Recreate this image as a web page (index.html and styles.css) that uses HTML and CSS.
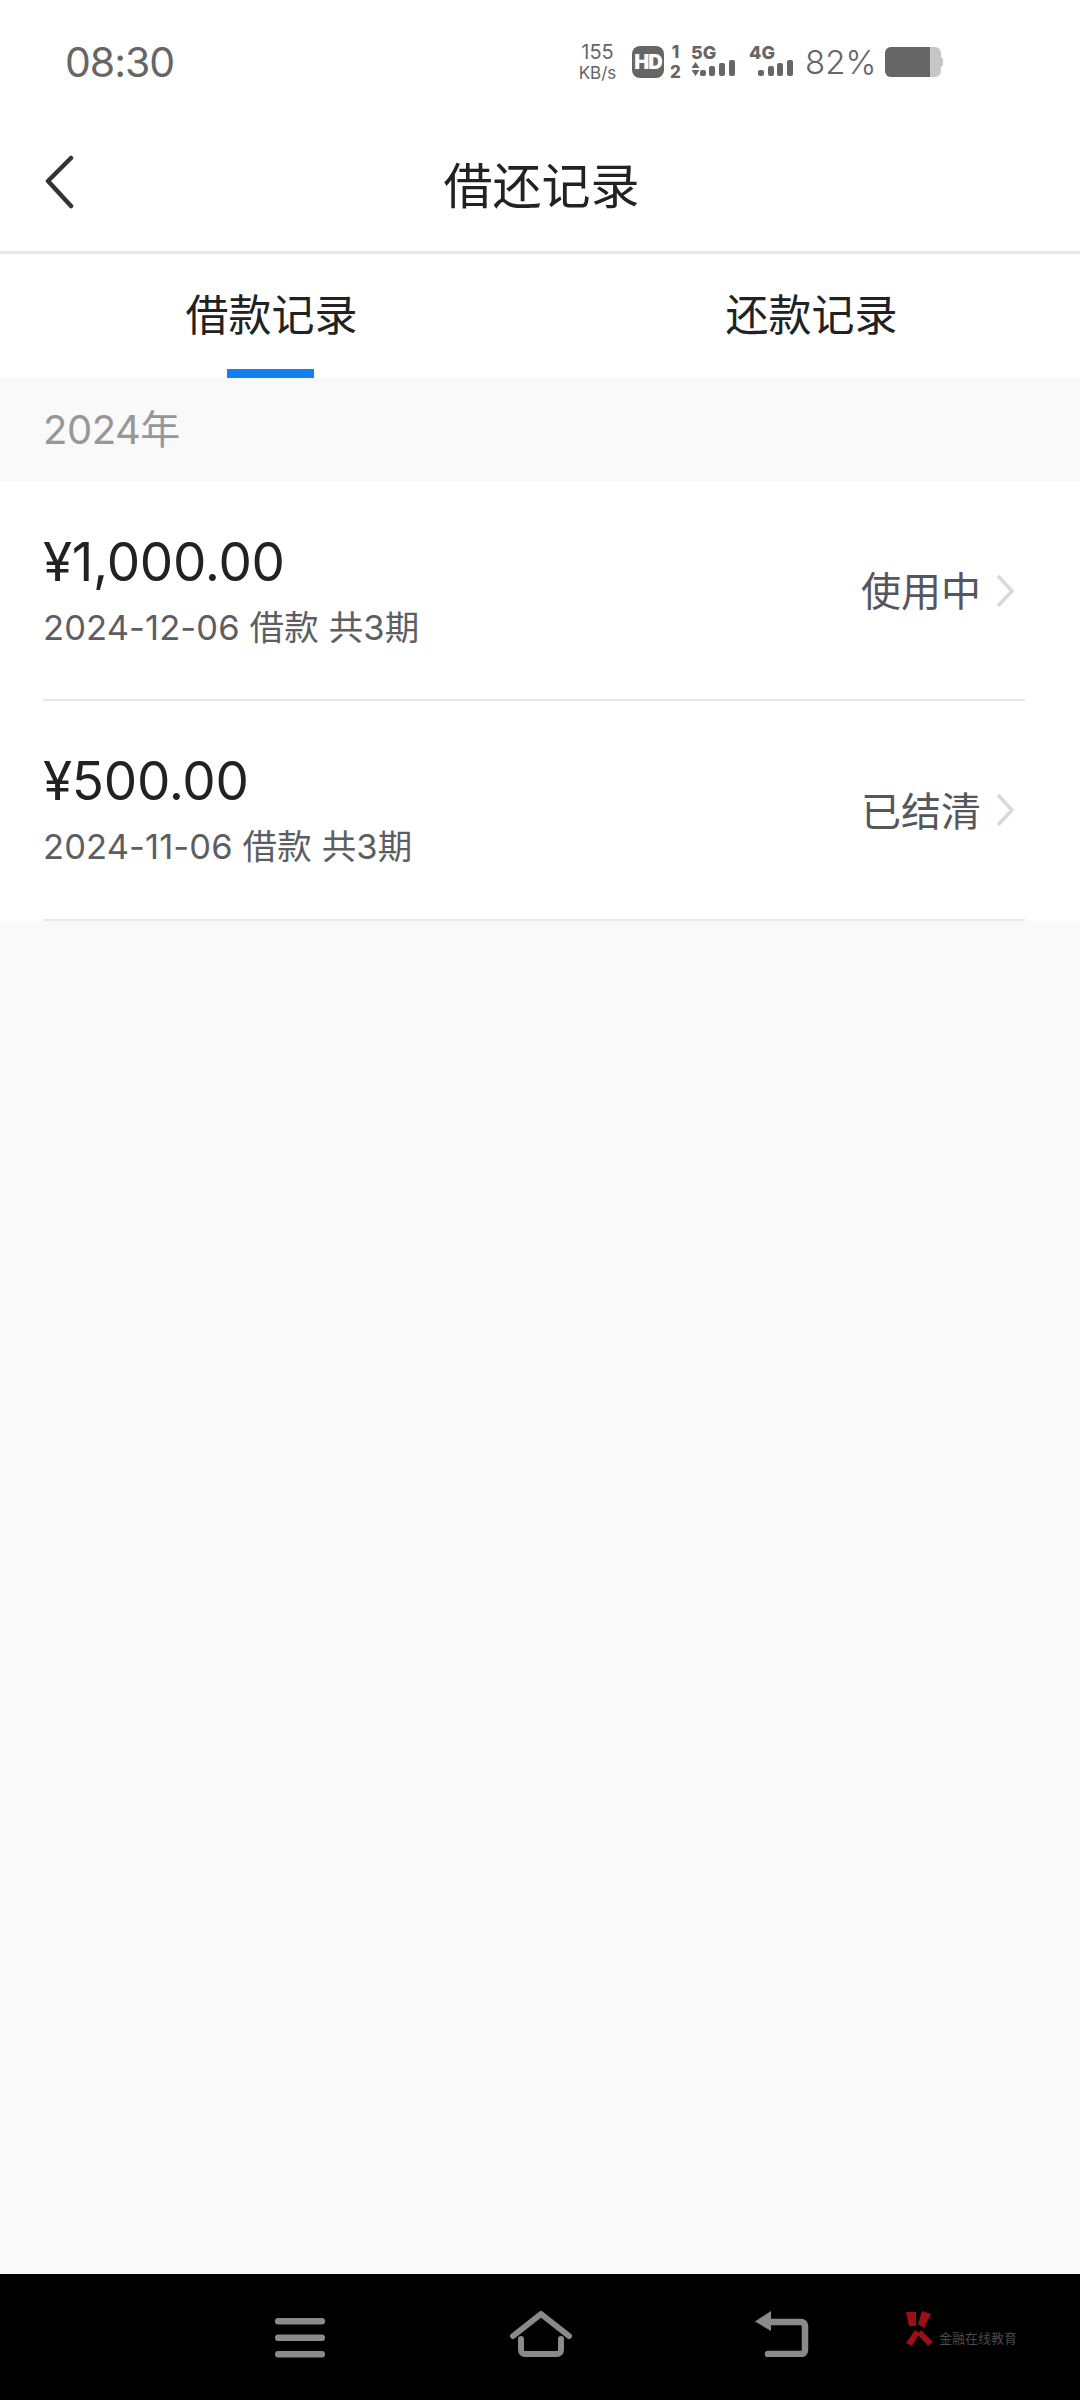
FILE: index.html
```html
<!DOCTYPE html>
<html lang="zh-CN">
<head>
    <meta charset="UTF-8">
    <meta name="viewport" content="width=device-width, initial-scale=1.0">
    <title>借还记录</title>
    <link rel="stylesheet" href="styles.css">
</head>
<body>
    <div class="page">
        <div class="status-bar">
            <span class="time">08:30</span>
            <div class="speed">155<br><small>KB/s</small></div>
            <span class="hd">HD</span>
            <div class="sim-nums"><span>1</span><span>2</span></div>
            <svg class="net net-5g" width="52" height="42" viewBox="0 -3 52 42">
                <text x="0" y="15" class="net-label">5G</text>
                <path d="M4.500 18l4 6H.5zM4.500 32l4-6H.5z" fill="#666"/>
                <rect x="9" y="26" width="6" height="6" rx="2" fill="#666"/>
                <rect x="18" y="22" width="6" height="10" rx="2" fill="#666"/>
                <rect x="28" y="19" width="6" height="13" rx="2" fill="#666"/>
                <rect x="38" y="16" width="6" height="16" rx="2" fill="#666"/>
            </svg>
            <svg class="net net-4g" width="48" height="42" viewBox="0 -3 48 42">
                <text x="0" y="15" class="net-label">4G</text>
                <rect x="9" y="26" width="6" height="6" rx="2" fill="#666"/>
                <rect x="19" y="22" width="6" height="10" rx="2" fill="#666"/>
                <rect x="28" y="19" width="6" height="13" rx="2" fill="#666"/>
                <rect x="38" y="16" width="6" height="16" rx="2" fill="#666"/>
            </svg>
            <span class="percent">82%</span>
            <svg class="battery" width="58" height="30" viewBox="0 0 58 30">
                <path d="M6 0h44a6 6 0 0 1 6 6v4a3 3 0 0 1 2 3v4a3 3 0 0 1-2 3v4a6 6 0 0 1-6 6H6a6 6 0 0 1-6-6V6a6 6 0 0 1 6-6z" fill="#c6c6c6"/>
                <path d="M6 0h39v30H6a6 6 0 0 1-6-6V6a6 6 0 0 1 6-6z" fill="#666"/>
            </svg>
        </div>

        <div class="title-bar">
            <svg class="back" width="30" height="54" viewBox="0 0 30 54">
                <path d="M26 3L3 26l23 25" fill="none" stroke="#333" stroke-width="4.5" stroke-linecap="round" stroke-linejoin="round"/>
            </svg>
            <h1>借还记录</h1>
        </div>

        <div class="tabs">
            <div class="tab active">借款记录</div>
            <div class="tab">还款记录</div>
        </div>

        <div class="year">2024年</div>

        <div class="list">
            <div class="row">
                <div class="row-info">
                    <div class="amount">¥1,000.00</div>
                    <div class="sub">2024-12-06 借款 共3期</div>
                </div>
                <span class="state">使用中</span>
                <svg class="arrow" width="20" height="34" viewBox="0 0 20 34">
                    <path d="M3 2l14 15L3 32" fill="none" stroke="#d9d9d9" stroke-width="3.5"/>
                </svg>
            </div>
            <div class="row">
                <div class="row-info">
                    <div class="amount">¥500.00</div>
                    <div class="sub">2024-11-06 借款 共3期</div>
                </div>
                <span class="state">已结清</span>
                <svg class="arrow" width="20" height="34" viewBox="0 0 20 34">
                    <path d="M3 2l14 15L3 32" fill="none" stroke="#d9d9d9" stroke-width="3.5"/>
                </svg>
            </div>
        </div>

        <div class="filler"></div>

        <div class="nav-bar">
            <svg class="nav-menu" width="50" height="40" viewBox="0 0 50 40">
                <rect x="0" y="0" width="50" height="6.5" rx="3" fill="#8a8a8a"/>
                <rect x="0" y="16.5" width="50" height="6.5" rx="3" fill="#8a8a8a"/>
                <rect x="0" y="33" width="50" height="6.5" rx="3" fill="#8a8a8a"/>
            </svg>
            <svg class="nav-home" width="62" height="46" viewBox="0 0 62 46">
                <path d="M3 25L31 3l28 22" fill="none" stroke="#8a8a8a" stroke-width="6" stroke-linecap="round" stroke-linejoin="round"/>
                <path d="M11 28v11a4 4 0 0 0 4 4h32a4 4 0 0 0 4-4V28" fill="none" stroke="#8a8a8a" stroke-width="6" stroke-linecap="round"/>
            </svg>
            <svg class="nav-back" width="54" height="46" viewBox="0 0 54 46">
                <path d="M16 0L0 10.500 16 20z" fill="#8a8a8a"/>
                <path d="M10 11h36a4 4 0 0 1 4 4v24a4 4 0 0 1-4 4H13" fill="none" stroke="#8a8a8a" stroke-width="6.500" stroke-linecap="round"/>
            </svg>
            <div class="brand">
                <svg width="30" height="36" viewBox="0 0 30 36">
                    <path d="M2 1h10v14H5zM18 0l9 3-7 14-6-4zM11 19l5 3-8 13-6-3zM17 19l12 12-5 4-10-11z" fill="#9c0f16"/>
                </svg>
                <span>金融在线教育</span>
            </div>
        </div>
    </div>
</body>
</html>
```

FILE: styles.css
```css
* {
    box-sizing: border-box;
}
body {
    margin: 0;
    font-family: Inter, "Noto Sans CJK SC", sans-serif;
    background-color: #f9f9f9;
    color: #222;
}
.page {
    display: flex;
    flex-direction: column;
    height: 2400px;
}

.status-bar {
    display: flex;
    align-items: center;
    height: 124px;
    padding-left: 65px;
    background-color: #fff;
    color: #666;
}
.time {
    width: 506px;
    font-size: 41px;
    letter-spacing: -1px;
}
.speed {
    width: 53px;
    margin-right: 8px;
    font-size: 20px;
    line-height: 20px;
    text-align: center;
}
.speed small {
    font-size: 17px;
}
.hd {
    width: 32px;
    height: 32px;
    border-radius: 8px;
    background-color: #666;
    color: #fff;
    font-size: 20px;
    font-weight: 900;
    letter-spacing: -1px;
    line-height: 32px;
    text-align: center;
}
.sim-nums {
    display: flex;
    flex-direction: column;
    width: 17px;
    margin: 0 7px 0 3px;
    font-size: 17px;
    font-weight: 800;
    line-height: 20px;
    text-align: center;
}
.net-5g {
    margin-right: 6px;
}
.net-4g {
    margin-right: 8px;
}
.net-label {
    font-family: Inter, sans-serif;
    font-size: 18px;
    font-weight: 800;
    fill: #666;
}
.percent {
    width: 80px;
    font-size: 33px;
    font-weight: 300;
}
.battery {
    display: block;
}

.title-bar {
    position: relative;
    display: flex;
    justify-content: center;
    align-items: center;
    height: 130px;
    padding: 0 0 11px 3px;
    border-bottom: 3px solid #e8e8e8;
    background-color: #fff;
}
.title-bar h1 {
    margin: 0;
    font-size: 49px;
    font-weight: 400;
}
.back {
    position: absolute;
    left: 45px;
    top: 31px;
}

.tabs {
    display: flex;
    height: 124px;
    background-color: #fff;
}
.tab {
    position: relative;
    flex: 1;
    padding-left: 3px;
    font-size: 43px;
    line-height: 122px;
    text-align: center;
}
.tab.active::after {
    content: "";
    position: absolute;
    left: 227px;
    bottom: 0;
    width: 87px;
    height: 9px;
    background-color: #1480f0;
}

.year {
    height: 104px;
    padding-left: 43px;
    color: #96979b;
    font-size: 40px;
    letter-spacing: -0.5px;
    line-height: 104px;
}

.list {
    background-color: #fff;
}
.row {
    display: flex;
    align-items: center;
    height: 219px;
    margin: 0 55px 0 43px;
    border-bottom: 2px solid #e9e9e9;
}
.row:last-child {
    height: 220px;
}
.amount {
    margin-top: -2px;
    font-size: 53px;
    letter-spacing: -0.3px;
    line-height: 66px;
}
.row-info {
    flex: 1;
}
.sub {
    margin-top: 10px;
    color: #5c5e63;
    font-size: 34.500px;
    letter-spacing: 0.12px;
    line-height: 46px;
}
.state {
    margin-bottom: 3px;
    color: #55575c;
    font-size: 40px;
}
.arrow {
    margin-left: 14px;
    margin-right: 10px;
}

.filler {
    flex: 1;
}

.nav-bar {
    display: flex;
    align-items: flex-start;
    height: 126px;
    padding: 37px 0 0 275px;
    background-color: #000;
}
.nav-menu {
    margin-top: 7px;
}
.nav-home {
    margin-left: 185px;
}
.nav-back {
    margin-left: 183px;
}
.brand {
    display: flex;
    align-items: flex-end;
    margin-left: 95px;
    color: #4a4a4a;
    font-size: 13px;
}
.brand span {
    margin-left: 5px;
}
```
